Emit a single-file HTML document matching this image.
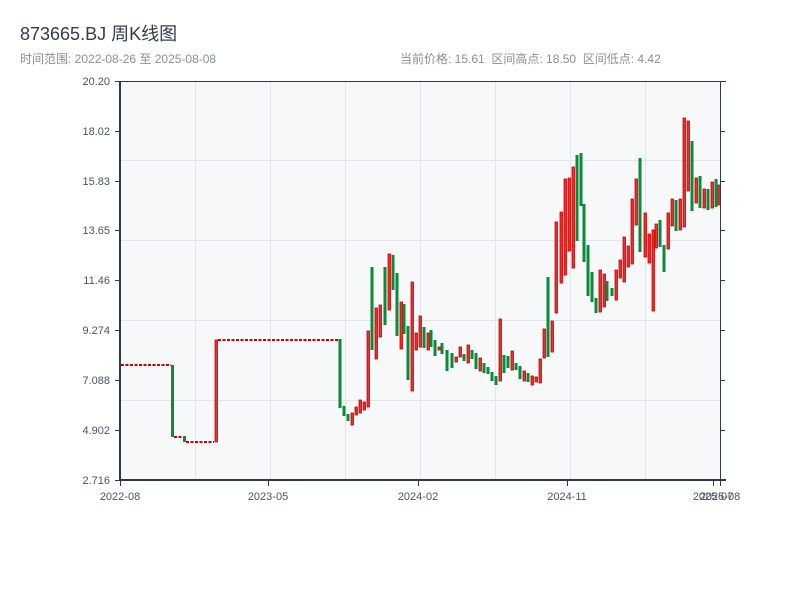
<!DOCTYPE html>
<html><head><meta charset="utf-8"><style>
body{margin:0;background:#fff;width:800px;height:600px;overflow:hidden;font-family:"Liberation Sans","Noto Sans CJK SC",sans-serif}
.g{fill:#0a8a3a}.r{fill:#e83030;stroke:#c00;stroke-width:0.8}
</style></head><body>
<svg width="800" height="600" xmlns="http://www.w3.org/2000/svg" font-family="Liberation Sans, Noto Sans CJK SC, sans-serif">
<text x="20" y="40" font-size="18" fill="#333c48">873665.BJ 周K线图</text>
<text x="20" y="63" font-size="12" fill="#8a8f96">时间范围: 2022-08-26 至 2025-08-08</text>
<text x="400" y="63" font-size="12" fill="#8a8f96" xml:space="preserve" style="white-space:pre">当前价格: 15.61  区间高点: 18.50  区间低点: 4.42</text>
<rect x="121" y="81" width="599" height="399" fill="#f6f8fa"/>
<g stroke="#e1e4ea" stroke-width="1">
<line x1="121" y1="160.5" x2="720" y2="160.5"/><line x1="121" y1="240.5" x2="720" y2="240.5"/><line x1="121" y1="320.5" x2="720" y2="320.5"/><line x1="121" y1="400.5" x2="720" y2="400.5"/>
<line x1="195.5" y1="81" x2="195.5" y2="480"/><line x1="270.5" y1="81" x2="270.5" y2="480"/><line x1="345.5" y1="81" x2="345.5" y2="480"/><line x1="420.5" y1="81" x2="420.5" y2="480"/><line x1="495.5" y1="81" x2="495.5" y2="480"/><line x1="570.5" y1="81" x2="570.5" y2="480"/><line x1="645.5" y1="81" x2="645.5" y2="480"/>
</g>
<g stroke="#c00" stroke-width="2" stroke-dasharray="3,1.5">
<line x1="121" y1="365" x2="171" y2="365"/><line x1="174" y1="437" x2="183" y2="437"/><line x1="186" y1="442" x2="214" y2="442"/><line x1="218" y1="340" x2="339" y2="340"/>
</g>
<g>
<rect x="171" y="365" width="3" height="72" class="g"/>
<rect x="183" y="436" width="3" height="6" class="g"/>
<rect x="215" y="340" width="2.5" height="102" class="r"/>
<rect x="338.5" y="339" width="3" height="69" class="g"/>
<rect x="342.5" y="406" width="3" height="10" class="g"/>
<rect x="346.5" y="414" width="3" height="7" class="g"/>
<rect x="351" y="413" width="2.5" height="12" class="r"/>
<rect x="355" y="407" width="2.5" height="8" class="r"/>
<rect x="359" y="400" width="2.5" height="13" class="r"/>
<rect x="363" y="402" width="2.5" height="8" class="r"/>
<rect x="367" y="331" width="2.5" height="76" class="r"/>
<rect x="370.5" y="267" width="3" height="83" class="g"/>
<rect x="375" y="308" width="2.5" height="51" class="r"/>
<rect x="379" y="305" width="2.5" height="32" class="r"/>
<rect x="383.5" y="267" width="3" height="58" class="g"/>
<rect x="388" y="254" width="2.5" height="56" class="r"/>
<rect x="391.5" y="255" width="3" height="35" class="g"/>
<rect x="395.5" y="273" width="3" height="63" class="g"/>
<rect x="400" y="302" width="2.5" height="47" class="r"/>
<rect x="402.5" y="304" width="3" height="30" class="g"/>
<rect x="406.5" y="326" width="3" height="54" class="g"/>
<rect x="411" y="282" width="2.5" height="109" class="r"/>
<rect x="415" y="333" width="2.5" height="17" class="r"/>
<rect x="419" y="316" width="2.5" height="31" class="r"/>
<rect x="422.5" y="327" width="3" height="21" class="g"/>
<rect x="427" y="333" width="2.5" height="17" class="r"/>
<rect x="429.5" y="330" width="3" height="17" class="g"/>
<rect x="433.5" y="340" width="3" height="16" class="g"/>
<rect x="438" y="347" width="2.5" height="3" class="r"/>
<rect x="440.5" y="343" width="3" height="11" class="g"/>
<rect x="445.5" y="350" width="3" height="21" class="g"/>
<rect x="450.5" y="353" width="3" height="15" class="g"/>
<rect x="455" y="357" width="2.5" height="5" class="r"/>
<rect x="459" y="347" width="2.5" height="10" class="r"/>
<rect x="462.5" y="354" width="3" height="7" class="g"/>
<rect x="467" y="345" width="2.5" height="18" class="r"/>
<rect x="470.5" y="350" width="3" height="9" class="g"/>
<rect x="474.5" y="353" width="3" height="16" class="g"/>
<rect x="479" y="358" width="2.5" height="13" class="r"/>
<rect x="482.5" y="363" width="3" height="10" class="g"/>
<rect x="486.5" y="367" width="3" height="7" class="g"/>
<rect x="490.5" y="372" width="3" height="9" class="g"/>
<rect x="494.5" y="376" width="3" height="9" class="g"/>
<rect x="499" y="319" width="2.5" height="62" class="r"/>
<rect x="502.5" y="355" width="3" height="18" class="g"/>
<rect x="506.5" y="356" width="3" height="12" class="g"/>
<rect x="511" y="351" width="2.5" height="19" class="r"/>
<rect x="514.5" y="363" width="3" height="7" class="g"/>
<rect x="518.5" y="366" width="3" height="13" class="g"/>
<rect x="523" y="371" width="2.5" height="10" class="r"/>
<rect x="526.5" y="373" width="3" height="9" class="g"/>
<rect x="531" y="376" width="2.5" height="9" class="r"/>
<rect x="535" y="377" width="2.5" height="5" class="r"/>
<rect x="539" y="359" width="2.5" height="24" class="r"/>
<rect x="543" y="329" width="2.5" height="29" class="r"/>
<rect x="546.5" y="277" width="3" height="80" class="g"/>
<rect x="551" y="321" width="2.5" height="31" class="r"/>
<rect x="555" y="222" width="2.5" height="91" class="r"/>
<rect x="560" y="212" width="2.5" height="71" class="r"/>
<rect x="564" y="179" width="2.5" height="96" class="r"/>
<rect x="568" y="178" width="2.5" height="73" class="r"/>
<rect x="572" y="167" width="2.5" height="101" class="r"/>
<rect x="575.5" y="155" width="3" height="86" class="g"/>
<rect x="579.5" y="153" width="3" height="53" class="g"/>
<rect x="582.5" y="204" width="3" height="58" class="g"/>
<rect x="586.5" y="245" width="3" height="51" class="g"/>
<rect x="590.5" y="272" width="3" height="30" class="g"/>
<rect x="594.5" y="298" width="3" height="15" class="g"/>
<rect x="599" y="270" width="2.5" height="42" class="r"/>
<rect x="603" y="274" width="2.5" height="33" class="r"/>
<rect x="605.5" y="281" width="3" height="20" class="g"/>
<rect x="610.5" y="288" width="3" height="8" class="g"/>
<rect x="615" y="270" width="2.5" height="30" class="r"/>
<rect x="619" y="260" width="2.5" height="18" class="r"/>
<rect x="623" y="237" width="2.5" height="45" class="r"/>
<rect x="627" y="246" width="2.5" height="21" class="r"/>
<rect x="631" y="199" width="2.5" height="65" class="r"/>
<rect x="635" y="179" width="2.5" height="46" class="r"/>
<rect x="638.5" y="158" width="3" height="94" class="g"/>
<rect x="644" y="213" width="2.5" height="44" class="r"/>
<rect x="648" y="234" width="2.5" height="29" class="r"/>
<rect x="652" y="230" width="2.5" height="81" class="r"/>
<rect x="655" y="224" width="2.5" height="24" class="r"/>
<rect x="658.5" y="220" width="3" height="27" class="g"/>
<rect x="662.5" y="245" width="3" height="27" class="g"/>
<rect x="667" y="213" width="2.5" height="36" class="r"/>
<rect x="671" y="199" width="2.5" height="27" class="r"/>
<rect x="674.5" y="200" width="3" height="31" class="g"/>
<rect x="679" y="199" width="2.5" height="31" class="r"/>
<rect x="683" y="118" width="2.5" height="109" class="r"/>
<rect x="687" y="121" width="2.5" height="70" class="r"/>
<rect x="690.5" y="141" width="3" height="70" class="g"/>
<rect x="695" y="178" width="2.5" height="25" class="r"/>
<rect x="698.5" y="176" width="3" height="32" class="g"/>
<rect x="703" y="189" width="2.5" height="19" class="r"/>
<rect x="706.5" y="189" width="3" height="21" class="g"/>
<rect x="711" y="182" width="2.5" height="26" class="r"/>
<rect x="714.5" y="179" width="3" height="28" class="g"/>
<rect x="718" y="185" width="2.5" height="20" class="r"/>
</g>
<g stroke="#2b3a4c" fill="none">
<line x1="120" y1="81.5" x2="726" y2="81.5" stroke-width="1"/>
<line x1="120" y1="81" x2="120" y2="481" stroke-width="2"/>
<line x1="120" y1="480" x2="726" y2="480" stroke-width="2"/>
<line x1="720.5" y1="81" x2="720.5" y2="480" stroke-width="1"/>
<g stroke-width="1">
<line x1="115" y1="81.5" x2="120" y2="81.5"/><line x1="115" y1="131.5" x2="120" y2="131.5"/><line x1="115" y1="181.5" x2="120" y2="181.5"/><line x1="115" y1="230.5" x2="120" y2="230.5"/><line x1="115" y1="280.5" x2="120" y2="280.5"/><line x1="115" y1="330.5" x2="120" y2="330.5"/><line x1="115" y1="380.5" x2="120" y2="380.5"/><line x1="115" y1="430.5" x2="120" y2="430.5"/><line x1="115" y1="480.5" x2="120" y2="480.5"/>
<line x1="720" y1="131.5" x2="725" y2="131.5"/><line x1="720" y1="181.5" x2="725" y2="181.5"/><line x1="720" y1="230.5" x2="725" y2="230.5"/><line x1="720" y1="280.5" x2="725" y2="280.5"/><line x1="720" y1="330.5" x2="725" y2="330.5"/><line x1="720" y1="380.5" x2="725" y2="380.5"/><line x1="720" y1="430.5" x2="725" y2="430.5"/>
<line x1="120.5" y1="480" x2="120.5" y2="486"/><line x1="268.5" y1="480" x2="268.5" y2="486"/><line x1="418.5" y1="480" x2="418.5" y2="486"/><line x1="567.5" y1="480" x2="567.5" y2="486"/><line x1="713.5" y1="480" x2="713.5" y2="486"/><line x1="720.5" y1="480" x2="720.5" y2="486"/>
</g></g>
<g font-size="11" fill="#4a5565" text-anchor="end">
<text x="110" y="85">20.20</text><text x="110" y="135">18.02</text><text x="110" y="185">15.83</text><text x="110" y="234">13.65</text><text x="110" y="284">11.46</text><text x="110" y="334">9.274</text><text x="110" y="384">7.088</text><text x="110" y="434">4.902</text><text x="110" y="484">2.716</text>
</g>
<g font-size="11" fill="#4a5565" text-anchor="middle">
<text x="120" y="500">2022-08</text><text x="268" y="500">2023-05</text><text x="418" y="500">2024-02</text><text x="567" y="500">2024-11</text><text x="713" y="500">2025-07</text><text x="720" y="500">2025-08</text>
</g>
</svg>
</body></html>
